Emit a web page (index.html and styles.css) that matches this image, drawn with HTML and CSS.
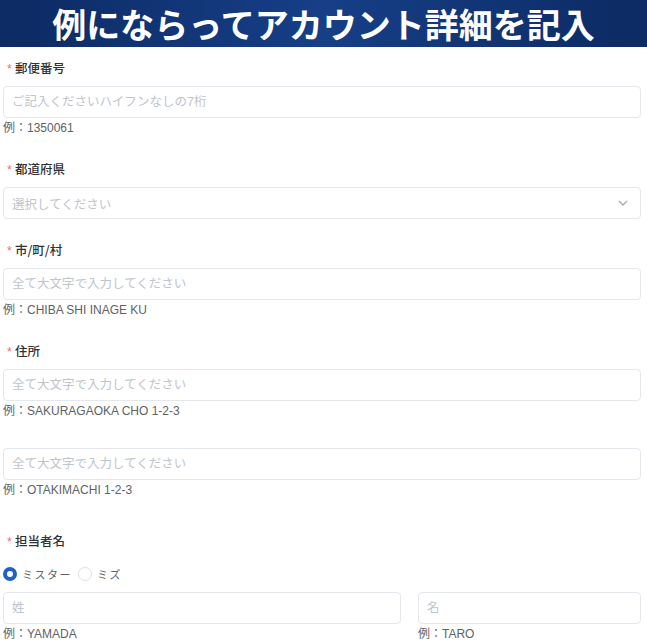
FILE: index.html
```html
<!DOCTYPE html>
<html lang="ja">
<head>
    <meta charset="UTF-8">
    <meta name="viewport" content="width=device-width, initial-scale=1.0">
    <title>アカウント詳細</title>
    <link rel="stylesheet" href="styles.css">
</head>
<body>
    <header class="banner">
        <h1>例にならってアカウント詳細を記入</h1>
    </header>

    <form class="account-form">
        <div class="form-item">
            <label class="form-label required">郵便番号</label>
            <input class="form-input" type="text" placeholder="ご記入くださいハイフンなしの7桁">
            <div class="form-hint">例：1350061</div>
        </div>

        <div class="form-item no-hint">
            <label class="form-label required">都道府県</label>
            <div class="form-select">
                <span class="select-placeholder">選択してください</span>
                <svg class="select-arrow" width="10" height="6" viewBox="0 0 10 6">
                    <path d="M1 1l4 4 4-4" fill="none" stroke="#a8abb2" stroke-width="1.4"/>
                </svg>
            </div>
        </div>

        <div class="form-item">
            <label class="form-label required">市/町/村</label>
            <input class="form-input" type="text" placeholder="全て大文字で入力してください">
            <div class="form-hint">例：CHIBA SHI INAGE KU</div>
        </div>

        <div class="form-item address-1">
            <label class="form-label required">住所</label>
            <input class="form-input" type="text" placeholder="全て大文字で入力してください">
            <div class="form-hint">例：SAKURAGAOKA CHO 1-2-3</div>
        </div>

        <div class="form-item address-2">
            <input class="form-input" type="text" placeholder="全て大文字で入力してください">
            <div class="form-hint">例：OTAKIMACHI 1-2-3</div>
        </div>

        <div class="form-item">
            <label class="form-label required">担当者名</label>
            <div class="radio-group">
                <label class="radio checked"><span class="radio-dot"></span>ミスター</label>
                <label class="radio"><span class="radio-dot"></span>ミズ</label>
            </div>
            <div class="name-row">
                <div>
                    <input class="form-input" type="text" placeholder="姓">
                    <div class="form-hint">例：YAMADA</div>
                </div>
                <div>
                    <input class="form-input" type="text" placeholder="名">
                    <div class="form-hint">例：TARO</div>
                </div>
            </div>
        </div>
    </form>
</body>
</html>
```

FILE: styles.css
```css
/* 基本リセット */
* {
    margin: 0;
    padding: 0;
    box-sizing: border-box;
}

body {
    background: #fff;
    font-family: "Liberation Sans", "Noto Sans CJK JP", sans-serif;
    color: #303133;
}

/* 上部バナー */
.banner {
    height: 47px;
    background: linear-gradient(90deg, #0c2a63 0%, #163f87 50%, #0c2a63 100%);
    display: flex;
    align-items: center;
    justify-content: center;
    overflow: hidden;
}

.banner h1 {
    color: #fff;
    font-family: "Noto Sans CJK JP", sans-serif;
    font-size: 34px;
    font-weight: 700;
    letter-spacing: 0;
    line-height: 47px;
    white-space: nowrap;
}

/* フォーム */
.account-form {
    padding: 11px 6px 0 3px;
}

.form-item {
    margin-bottom: 21px;
}

.form-item.address-1 {
    margin-bottom: 27px;
}

.form-item.address-2 {
    margin-bottom: 31px;
}

.form-label {
    display: block;
    height: 20px;
    line-height: 20px;
    margin-bottom: 8px;
    padding-left: 4px;
    font-family: "Noto Sans CJK JP", sans-serif;
    font-size: 12.5px;
    font-weight: 500;
    color: #303133;
}

.form-label.required::before {
    content: "*";
    color: #f56c6c;
    margin-right: 3px;
    font-family: "Liberation Sans", sans-serif;
}

.form-input,
.form-select {
    display: block;
    width: 100%;
    height: 32px;
    border: 1px solid #e4e7ed;
    border-radius: 4px;
    padding: 0 8px;
    font-family: "Liberation Sans", "Noto Sans CJK JP", sans-serif;
    font-size: 12.5px;
    color: #303133;
    outline: none;
    background: #fff;
}

.form-input::placeholder {
    color: #c0c4cc;
}

.form-select {
    display: flex;
    align-items: center;
    justify-content: space-between;
    padding-right: 12px;
}

.select-placeholder {
    color: #c0c4cc;
}

.form-hint {
    height: 20px;
    line-height: 20px;
    font-size: 12px;
    color: #606266;
}

/* ラジオ */
.radio-group {
    display: flex;
    align-items: center;
    height: 20px;
    margin: 13px 0 8px;
}

.radio {
    display: flex;
    align-items: center;
    font-family: "Noto Sans CJK JP", sans-serif;
    font-size: 11px;
    letter-spacing: 1.5px;
    color: #606266;
    margin-right: 6px;
}

.radio-dot {
    width: 14px;
    height: 14px;
    border: 1px solid #dcdfe6;
    border-radius: 50%;
    margin-right: 5px;
    background: #fff;
}

.radio.checked .radio-dot {
    border: 4px solid #2160c4;
    background: #fff;
}

.name-row {
    display: grid;
    grid-template-columns: 398px 1fr;
    gap: 17px;
}
```
